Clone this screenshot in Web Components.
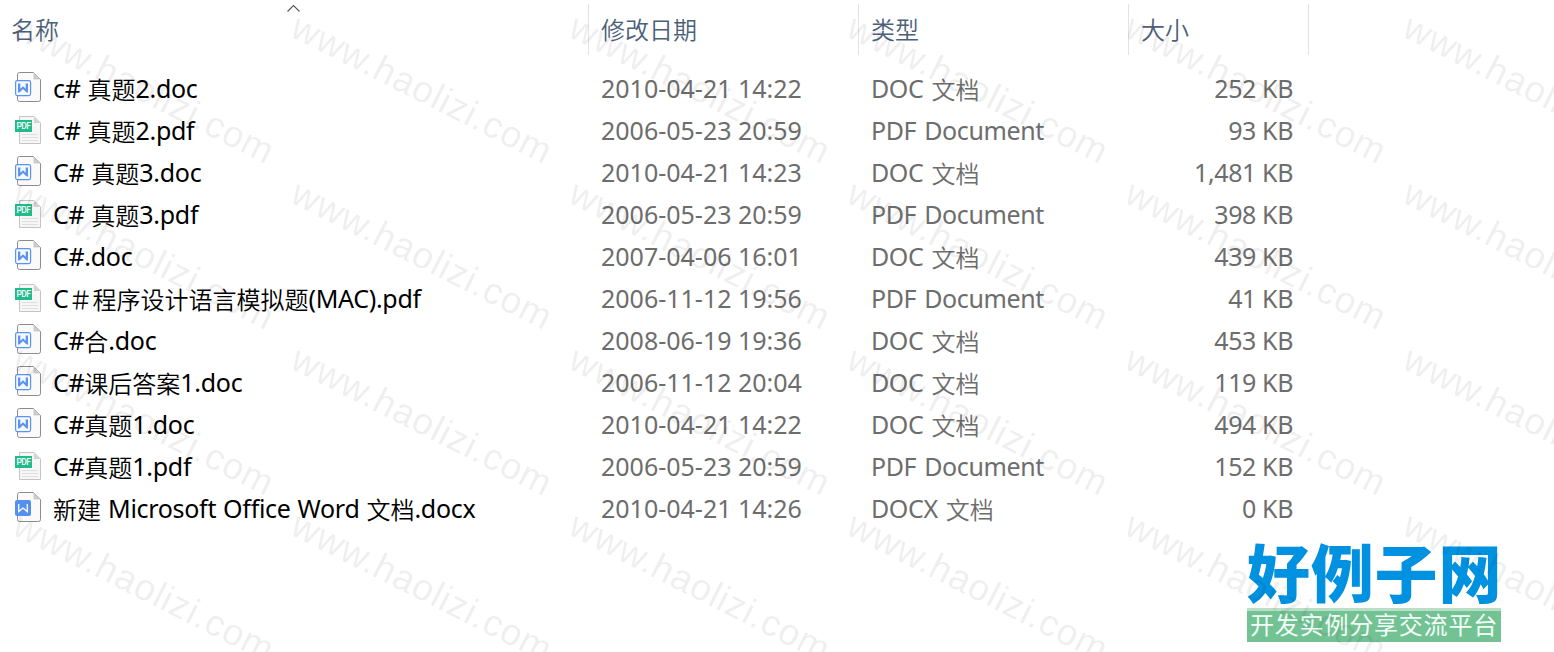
<!DOCTYPE html>
<html lang="zh-CN">
<head>
<meta charset="utf-8">
<title>文件列表</title>
<style>
  body {
    margin: 0;
    width: 1554px;
    height: 652px;
    overflow: hidden;
    position: relative;
    background: #fff;
    font-family: "Noto Sans", "Noto Sans CJK SC", sans-serif;
  }
</style>
</head>
<body>

<template id="mixed-text">
  <style>
    :host { display: inline-block; font-size: 25px; letter-spacing: var(--track, 0); }
    #out { white-space: pre; }
    .cjk { font: 24px "Noto Sans CJK SC", sans-serif; font-weight: 350; letter-spacing: 0; line-height: 1; vertical-align: -1px; }
  </style>
  <span id="out"></span>
</template>

<template id="file-icon">
  <style>
    :host { display: block; width: 28px; height: 32px; }
    svg { display: block; }
  </style>
</template>

<template id="file-header">
  <style>
    :host { display: grid; grid-template-columns: 588px 270px 270px 180px; height: 51px; padding-top: 4px; color: #4c607a; }
    div { box-sizing: border-box; border-right: 1px solid #e2e2e2; padding: 7px 0 0 13px; position: relative; width: calc(100% + 1px); line-height: 34px; }
    div:first-of-type { padding-left: 11px; }
    svg { position: absolute; left: 286px; top: 0; }
  </style>
  <div><slot name="name"></slot><svg width="15" height="9" fill="none" stroke="#555" stroke-width="1.1"><path d="M1.5 7.5 7.5 1.5 13.5 7.5"/></svg></div>
  <div><slot name="date"></slot></div>
  <div><slot name="type"></slot></div>
  <div><slot name="size"></slot></div>
</template>

<template id="file-row">
  <style>
    :host { display: grid; grid-template: 42px / 588px 270px 270px 180px; height: 42px; line-height: 42px; color: #6d6d6d; }
    .name { display: flex; align-items: flex-start; gap: 11px; padding-left: 14px; color: #000; --track: -.3px; word-spacing: .8px; }
    file-icon { margin-top: 4px; }
    .cell { padding-left: 13px; }
    #type { --track: -.4px; word-spacing: 2px; }
    .size { text-align: right; padding-right: 15px; --track: -.4px; }
  </style>
  <div class="name"><file-icon></file-icon><mixed-text id="name"></mixed-text></div>
  <div class="cell"><mixed-text id="date"></mixed-text></div>
  <div class="cell"><mixed-text id="type"></mixed-text></div>
  <div class="size"><mixed-text id="size"></mixed-text></div>
</template>

<template id="site-logo">
  <style>
    :host { position: absolute; left: 1247px; top: 540px; width: 254px; display: block; font-family: "Noto Sans CJK SC", sans-serif; white-space: nowrap; }
    .title { height: 68px; line-height: 60px; font-size: 63px; letter-spacing: .8px; font-weight: 900; color: #0092e0; }
    .sub { box-sizing: border-box; height: 34px; border-top: 3px solid #b9dfc9; background: #72c294; color: #f4fff8; font-size: 24px; letter-spacing: .8px; line-height: 26px; padding-left: 3px; }
  </style>
  <div class="title"><slot name="title"></slot></div>
  <div class="sub"><slot name="sub"></slot></div>
</template>

<template id="water-mark">
  <style>
    :host { position: absolute; inset: 0; overflow: hidden; display: grid; grid-template-columns: repeat(6, 278px); grid-auto-rows: 166px; pointer-events: none; }
    svg { overflow: visible; width: 278px; height: 166px; }
    text { font: 37px "Liberation Sans", sans-serif; letter-spacing: .9px; fill: rgba(0, 0, 0, .08); }
  </style>
</template>

<file-header>
  <mixed-text slot="name" text="名称"></mixed-text>
  <mixed-text slot="date" text="修改日期"></mixed-text>
  <mixed-text slot="type" text="类型"></mixed-text>
  <mixed-text slot="size" text="大小"></mixed-text>
</file-header>
<file-list></file-list>
<site-logo><span slot="title">好例子网</span><span slot="sub">开发实例分享交流平台</span></site-logo>
<water-mark text="www.haolizi.com"></water-mark>

<script>
  (function() {
    let stamp = (el) => {
      let root = el.attachShadow({mode: 'open'});
      let tpl = document.querySelector(`template#${el.localName}`);
      root.append(document.importNode(tpl.content, true));
      return root;
    };

    // latin runs are a touch larger than the CJK ones
    class MixedText extends HTMLElement {
      static observedAttributes = ['text'];

      attributeChangedCallback(name, old, value) {
        let root = this.shadowRoot || stamp(this);
        let out = root.querySelector('#out');
        out.innerHTML = value.replace(/[\u4e00-\u9fff＃]+/g, '<span class="cjk">$&</span>');
      }
    }

    let page = `<path d="M5.5 1.5H19.5L26.5 8.5V28.5Q26.5 30.5 24.5 30.5H5.5Q3.5 30.5 3.5 28.5V3.5Q3.5 1.5 5.5 1.5Z" fill="#fafafa" stroke="#8c8c8c"/>
      <path d="M20 2V8H26Z" fill="#cfcfcf" stroke="#b5b5b5" stroke-width=".6"/>`;
    let icons = {
      doc: `${page}<rect x="1.6" y="9.6" width="15" height="15" rx="1.8" fill="#f4f8ff" stroke="#5b93ee" stroke-width="1.2"/>
        <path d="M4 12.5H6.3V17.8L9 15.2 11.7 17.8V12.5H14V21.5H12.6L9 18 5.4 21.5H4Z" fill="#5b93ee"/>`,
      docx: `${page}<rect x="1" y="9" width="16" height="16" rx="2" fill="#5590ef"/>
        <path d="M4.7 13V20.6L9 17 13.3 20.6V13" fill="none" stroke="#fff" stroke-width="1.3"/>`,
      pdf: `<path d="M5.5 3.5H20L26.5 10V30.5H5.5Z" fill="#f6f6f6" stroke="#c4c4c4"/>
        <path d="M20 4V10H26Z" fill="#d2d2d2"/>
        <path d="M8 21.5H24M8 24.5H24M8 27.5H24" stroke="#dedede"/>
        <rect x="1" y="7" width="17" height="12" fill="#20bd8c"/>
        <text x="2.4" y="16" font-family="Roboto" font-size="8.4" font-weight="500" letter-spacing="0" textLength="14.4" fill="#fff">PDF</text>`
    };
    class FileIcon extends HTMLElement {
      set kind(k) {
        let root = this.shadowRoot || stamp(this);
        root.append(document.createRange().createContextualFragment(
          `<svg width="28" height="32" viewBox="0 0 28 32">${icons[k]}</svg>`));
      }
    }

    class FileHeader extends HTMLElement {
      constructor() { super(); stamp(this); }
    }

    class FileRow extends HTMLElement {
      connectedCallback() {
        let root = stamp(this);
        for (let key of ['name', 'date', 'type', 'size']) {
          root.querySelector('#' + key).setAttribute('text', this.data[key]);
        }
        root.querySelector('file-icon').kind = this.data.name.split('.').pop();
      }
    }

    let files = [
      ['c# 真题2.doc', '2010-04-21 14:22', 'DOC 文档', '252 KB'],
      ['c# 真题2.pdf', '2006-05-23 20:59', 'PDF Document', '93 KB'],
      ['C# 真题3.doc', '2010-04-21 14:23', 'DOC 文档', '1,481 KB'],
      ['C# 真题3.pdf', '2006-05-23 20:59', 'PDF Document', '398 KB'],
      ['C#.doc', '2007-04-06 16:01', 'DOC 文档', '439 KB'],
      ['C＃程序设计语言模拟题(MAC).pdf', '2006-11-12 19:56', 'PDF Document', '41 KB'],
      ['C#合.doc', '2008-06-19 19:36', 'DOC 文档', '453 KB'],
      ['C#课后答案1.doc', '2006-11-12 20:04', 'DOC 文档', '119 KB'],
      ['C#真题1.doc', '2010-04-21 14:22', 'DOC 文档', '494 KB'],
      ['C#真题1.pdf', '2006-05-23 20:59', 'PDF Document', '152 KB'],
      ['新建 Microsoft Office Word 文档.docx', '2010-04-21 14:26', 'DOCX 文档', '0 KB']
    ];
    class FileList extends HTMLElement {
      constructor() {
        super();
        let root = this.attachShadow({mode: 'open'});
        root.innerHTML = '<style>:host { display: block; padding-top: 12px; }</style>';
        for (let [name, date, type, size] of files) {
          let row = document.createElement('file-row');
          row.data = {name, date, type, size};
          root.append(row);
        }
      }
    }

    class SiteLogo extends HTMLElement {
      constructor() { super(); stamp(this); }
    }

    class WaterMark extends HTMLElement {
      connectedCallback() {
        let root = stamp(this);
        let tile = `<svg><text transform="translate(10.5 35.5) rotate(26.8)">${this.getAttribute('text')}</text></svg>`;
        root.append(document.createRange().createContextualFragment(tile.repeat(24)));
      }
    }

    customElements.define('mixed-text', MixedText);
    customElements.define('file-icon', FileIcon);
    customElements.define('file-header', FileHeader);
    customElements.define('file-row', FileRow);
    customElements.define('file-list', FileList);
    customElements.define('site-logo', SiteLogo);
    customElements.define('water-mark', WaterMark);
  })();
</script>
</body>
</html>
